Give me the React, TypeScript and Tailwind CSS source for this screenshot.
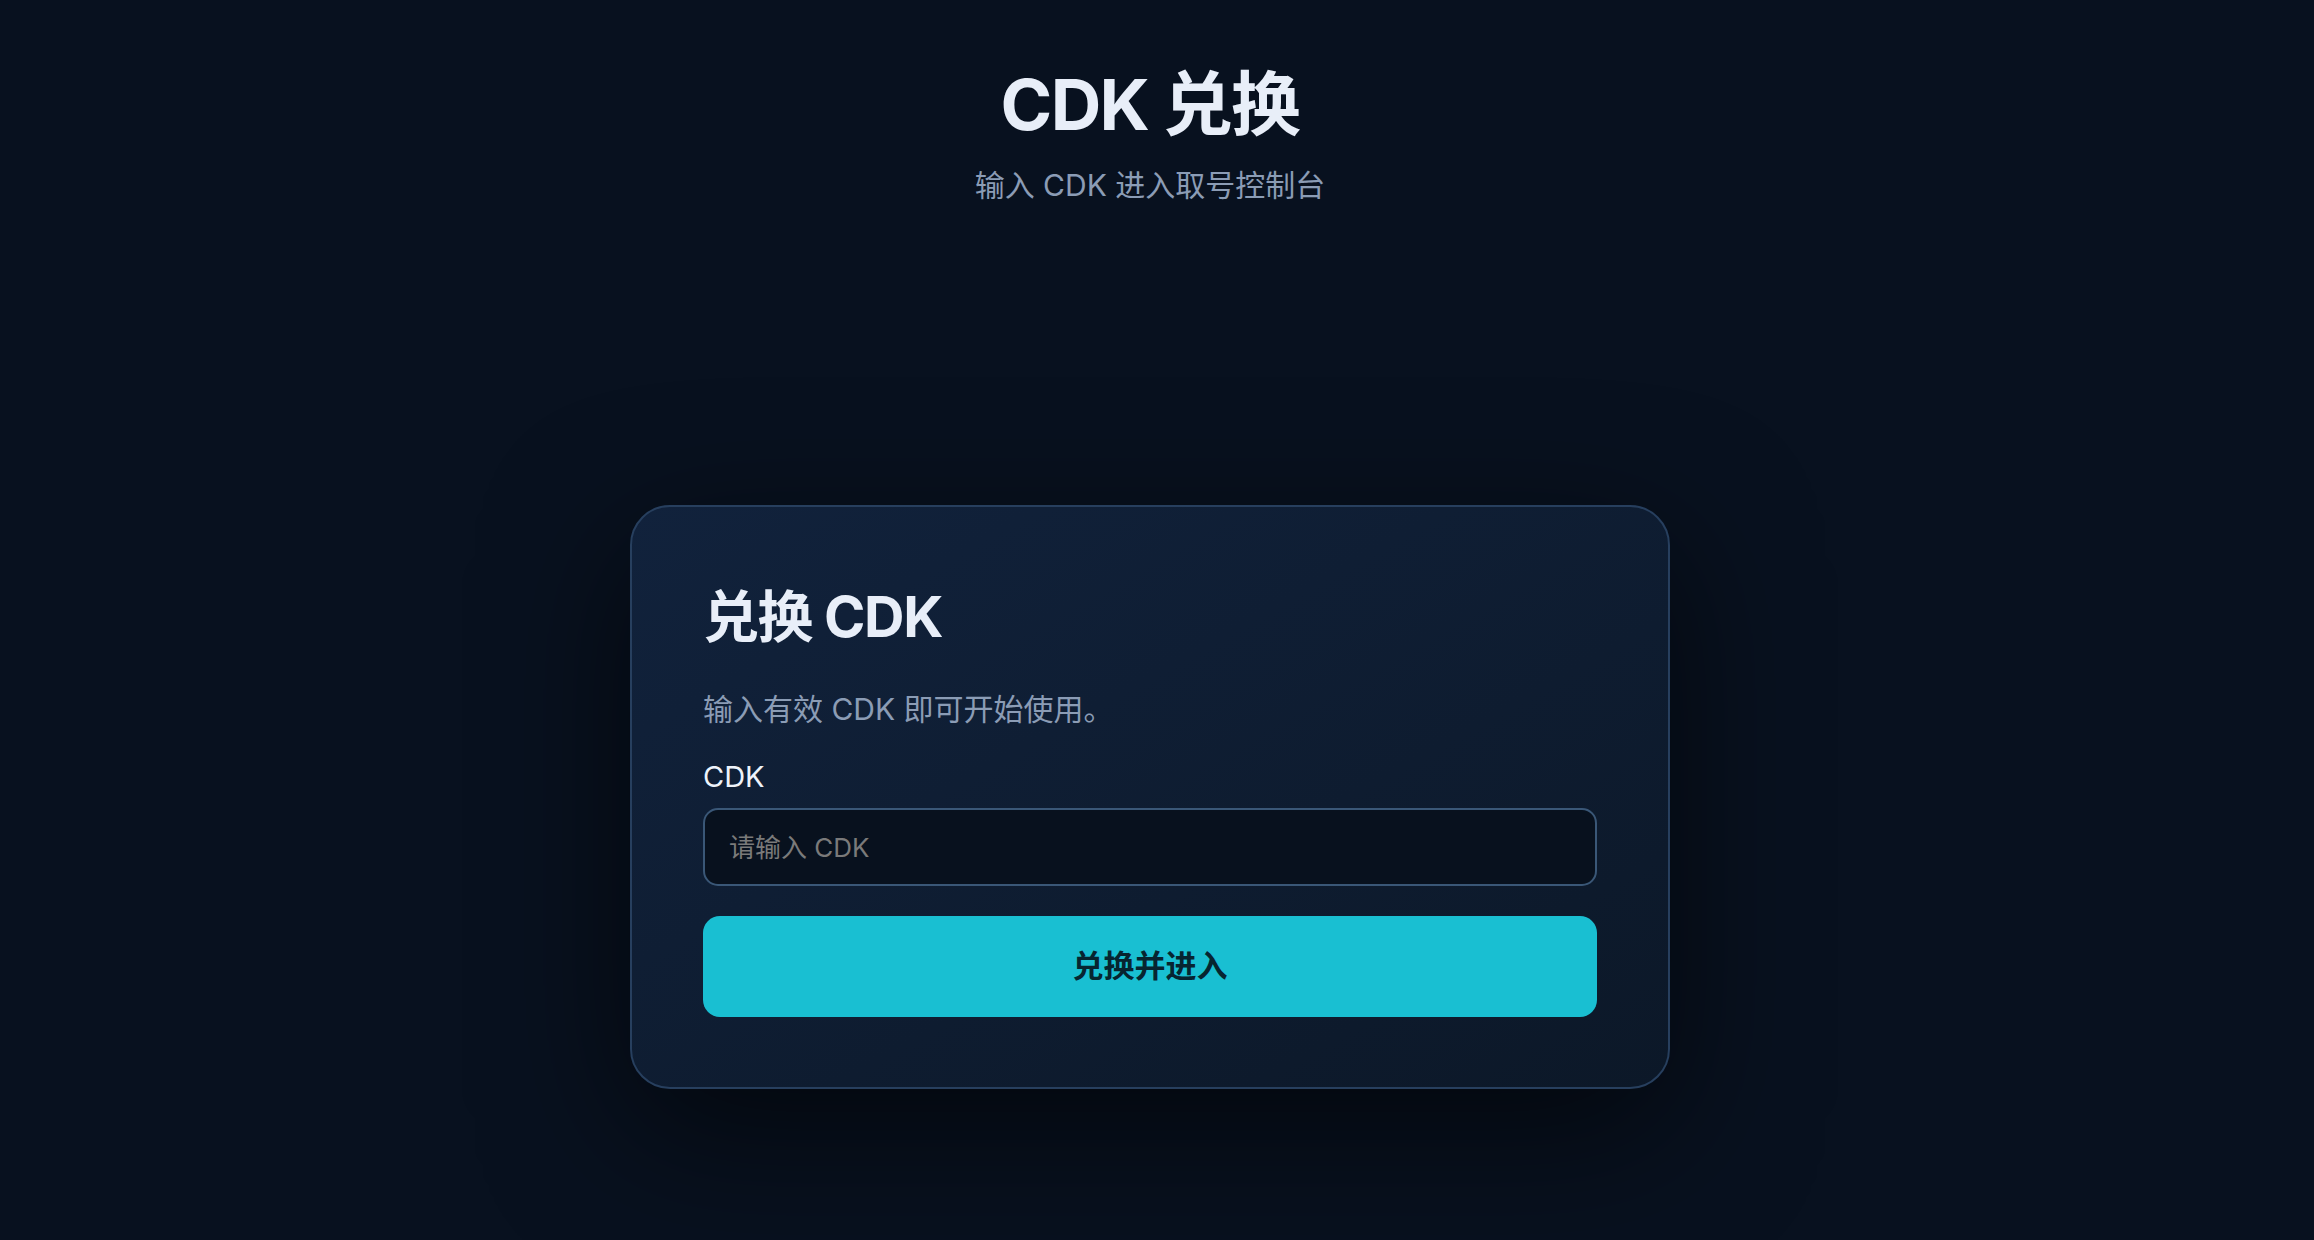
import { useState } from 'react';

export default function App() {
  const [cdk, setCdk] = useState('');

  return (
    <div
      className="min-h-screen w-full bg-[#08111f] text-[#e8eef8]"
      style={{ fontFamily: 'Inter, "Noto Sans CJK SC", sans-serif' }}
    >
      <div className="w-[2300px] flex flex-col items-center pt-[70px] pb-[151px]">
        {/* header */}
        <h1 className="text-[70px] font-bold leading-none tracking-tight text-[#e8eef8]">CDK 兑换</h1>
        <p className="mt-[30px] text-[30px] leading-none text-[#8b9cb5]">输入 CDK 进入取号控制台</p>

        {/* card */}
        <div className="mt-[305px] w-[1040px] rounded-[40px] border-2 border-[#273f5e] bg-gradient-to-br from-[#11223c] to-[#0c1828] px-[71px] pt-[71px] pb-[70px] shadow-[0_40px_140px_rgba(0,0,0,0.6)]">
          <h2 className="text-[56px] font-bold leading-[78px] tracking-tight text-[#e8eef8]">兑换 CDK</h2>
          <p className="mt-[31px] text-[30px] leading-[44px] text-[#8b9cb5]">输入有效 CDK 即可开始使用。</p>

          <label className="mt-[26px] block text-[29px] leading-[40px] text-[#eef3fa]">CDK</label>
          <input
            value={cdk}
            onChange={(e) => setCdk(e.target.value)}
            placeholder="请输入 CDK"
            className="mt-[11px] block h-[78px] w-full rounded-[15px] border-2 border-[#3a5777] bg-[#08111e] px-[24px] text-[26px] text-[#e8eef8] outline-none placeholder:text-[#7a7a7a]"
          />

          <button className="mt-[30px] flex h-[101px] w-full items-center justify-center rounded-[17px] bg-[#19bfd2] text-[31px] font-bold text-[#072530]">
            兑换并进入
          </button>
        </div>
      </div>
    </div>
  );
}
